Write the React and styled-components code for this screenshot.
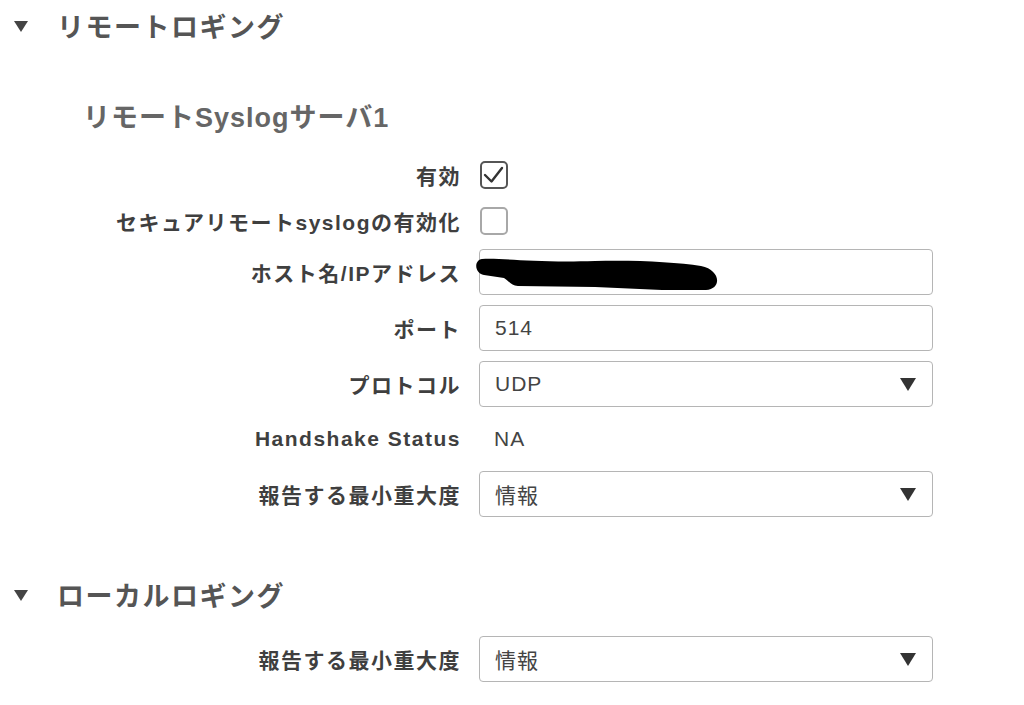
import styled, { createGlobalStyle } from 'styled-components';

const GlobalStyle = createGlobalStyle`
  html, body {
    margin: 0;
    padding: 0;
    background: #ffffff;
  }
  body {
    font-family: "Liberation Sans", "Noto Sans CJK JP", sans-serif;
    color: #444;
  }
`;

const Page = styled.div`
  width: 1024px;
  height: 705px;
  overflow: hidden;
`;

const SectionHeader = styled.div`
  display: flex;
  align-items: center;
  height: 50px;
  padding-left: 14px;
  margin-top: ${p => p.$top || 0}px;
  font-size: 27px;
  font-weight: bold;
  letter-spacing: 1.5px;
  color: #555;
`;

const Caret = styled.span`
  width: 0;
  height: 0;
  border-left: 7.5px solid transparent;
  border-right: 7.5px solid transparent;
  border-top: 11px solid #444;
  margin-right: 29px;
  margin-top: 3px;
`;

const SubHeader = styled.div`
  margin-top: 43px;
  padding-left: 83px;
  line-height: 50px;
  font-size: 27px;
  font-weight: bold;
  letter-spacing: 1px;
  color: #666;
`;

const Form = styled.div`
  display: flex;
  flex-direction: column;
  gap: 10px;
  margin-top: ${p => p.$top || 0}px;
`;

const Row = styled.div`
  display: flex;
  align-items: center;
  height: ${p => p.$height || 46}px;
`;

const Label = styled.div`
  width: 461px;
  flex-shrink: 0;
  margin-right: 18px;
  text-align: right;
  font-size: 21px;
  font-weight: bold;
  letter-spacing: 1.5px;
  color: #3f3f3f;
  white-space: nowrap;
`;

const Control = styled.div`
  position: relative;
  width: 454px;
  display: flex;
  align-items: center;
`;

const Box = styled.span`
  box-sizing: border-box;
  width: 28px;
  height: 28px;
  margin-left: 1px;
  border-radius: 5px;
  border: 2px solid ${p => (p.$checked ? '#555' : '#a8a8a8')};
  display: flex;
  align-items: center;
  justify-content: center;
  background: #fff;
`;

const TextInput = styled.input`
  box-sizing: border-box;
  width: 454px;
  height: 46px;
  border: 1px solid #b5b5b5;
  border-radius: 4px;
  padding: 0 15px;
  font-family: "Liberation Sans", "Noto Sans CJK JP", sans-serif;
  font-size: 21px;
  letter-spacing: 1px;
  color: #444;
  background: #fff;
  outline: none;
`;

const SelectBox = styled.div`
  box-sizing: border-box;
  width: 454px;
  height: 46px;
  border: 1px solid #b5b5b5;
  border-radius: 4px;
  padding: 0 16px 0 15px;
  display: flex;
  align-items: center;
  justify-content: space-between;
  font-size: 21px;
  letter-spacing: 1px;
  color: #444;
  &::after {
    content: "";
    width: 0;
    height: 0;
    border-left: 8.5px solid transparent;
    border-right: 8.5px solid transparent;
    border-top: 13px solid #333;
  }
`;

const Value = styled.span`
  padding-left: 15px;
  font-size: 21px;
  letter-spacing: 1px;
  color: #444;
`;

const Redaction = styled.svg`
  position: absolute;
  left: -5px;
  top: 8px;
  pointer-events: none;
`;

const Checkbox = ({ checked }) => (
  <Box $checked={checked}>
    {checked && (
      <svg width="24" height="24" viewBox="0 0 24 24">
        <path d="M3 12 L9.5 18.5 L20 5" fill="none" stroke="#333" strokeWidth="2.4" strokeLinecap="round" strokeLinejoin="round" />
      </svg>
    )}
  </Box>
);

const Select = ({ value }) => <SelectBox>{value}</SelectBox>;

export default function App() {
  return (
    <Page>
      <GlobalStyle />
      <SectionHeader>
        <Caret />
        リモートロギング
      </SectionHeader>

      <SubHeader>リモートSyslogサーバ1</SubHeader>

      <Form $top={14}>
        <Row $height={36}>
          <Label>有効</Label>
          <Control><Checkbox checked /></Control>
        </Row>
        <Row $height={36}>
          <Label>セキュアリモートsyslogの有効化</Label>
          <Control><Checkbox /></Control>
        </Row>
        <Row>
          <Label>ホスト名/IPアドレス</Label>
          <Control>
            <TextInput defaultValue="" />
            <Redaction width="248" height="38" viewBox="-2 0 248 38">
              <path
                d="M6,2 C30,1 60,6 119,4 C160,3 200,5 225,9 C245,13 246,32 230,33 L186,33 L119,30 L42,29 C36,29 34,25 28,21 L8,18 C-2,16 -2,3 6,2 Z"
                fill="#000"
              />
            </Redaction>
          </Control>
        </Row>
        <Row>
          <Label>ポート</Label>
          <Control><TextInput defaultValue="514" /></Control>
        </Row>
        <Row>
          <Label>プロトコル</Label>
          <Control><Select value="UDP" /></Control>
        </Row>
        <Row $height={44}>
          <Label>Handshake Status</Label>
          <Control><Value>NA</Value></Control>
        </Row>
        <Row>
          <Label>報告する最小重大度</Label>
          <Control><Select value="情報" /></Control>
        </Row>
      </Form>

      <SectionHeader $top={52}>
        <Caret />
        ローカルロギング
      </SectionHeader>

      <Form $top={17}>
        <Row>
          <Label>報告する最小重大度</Label>
          <Control><Select value="情報" /></Control>
        </Row>
      </Form>
    </Page>
  );
}
